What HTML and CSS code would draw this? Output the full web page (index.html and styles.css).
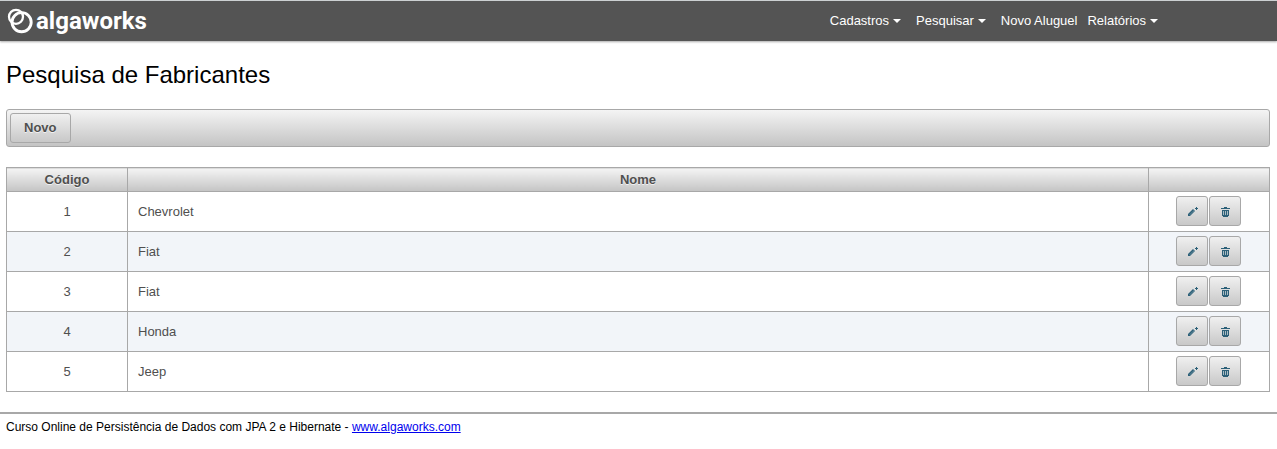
FILE: index.html
```html
<!DOCTYPE html>
<html lang="pt-BR">
<head>
<meta charset="utf-8">
<title>Pesquisa de Fabricantes</title>
<link rel="stylesheet" href="styles.css">
</head>
<body>
<svg width="0" height="0" class="sprite" aria-hidden="true">
  <symbol id="pencil" viewBox="0 0 10 10"><path d="M0 9V7L5 2L7 4L2 9Z" fill="#2c6078"/><path d="M2 7.5L6 3.5" stroke="#b9c8ce" stroke-width=".7" stroke-dasharray="1 .6"/><path d="M7 1H8V0H9V1H10V2H9V3H8V2H7Z" fill="#2c6078"/></symbol>
  <symbol id="trash" viewBox="0 0 10 10"><path d="M3 0H6V1H9V2H0V1H3ZM1 3H8V9H7V10H2V9H1Z" fill="#2c6078"/><path d="M2.5 4V8M4.5 4V8M6.5 4V8" stroke="#c9d3d7" stroke-width=".8"/></symbol>
  <symbol id="caret" viewBox="0 0 8 4"><path d="M0 0H8L4 4Z" fill="#fff"/></symbol>
</svg>
<header class="topbar">
  <a class="logo" href="#" aria-label="algaworks">
    <svg class="mark" viewBox="0 0 26 26" fill="none" stroke="#fff"><circle cx="14.6" cy="14.2" r="9.6" stroke-width="2.9"/><circle cx="9" cy="8.8" r="7" stroke-width="2.3"/></svg>
    <span>algaworks</span>
  </a>
  <nav class="menu">
    <a class="parent" href="#">Cadastros<svg class="caret"><use href="#caret"/></svg></a>
    <a class="parent" href="#">Pesquisar<svg class="caret"><use href="#caret"/></svg></a>
    <a class="single" href="#">Novo Aluguel</a>
    <a href="#">Relatórios<svg class="caret"><use href="#caret"/></svg></a>
  </nav>
</header>
<main class="content">
  <h1>Pesquisa de Fabricantes</h1>
  <div class="toolbar"><button class="btn" type="button">Novo</button></div>
  <table class="grid">
    <colgroup><col class="narrow"><col><col class="narrow"></colgroup>
    <thead><tr><th>Código</th><th>Nome</th><th></th></tr></thead>
    <tbody>
      <tr><td>1</td><td>Chevrolet</td><td><div class="actions"><button class="btn icon" type="button" aria-label="Editar"><svg><use href="#pencil"/></svg></button><button class="btn icon" type="button" aria-label="Excluir"><svg><use href="#trash"/></svg></button></div></td></tr>
      <tr><td>2</td><td>Fiat</td><td><div class="actions"><button class="btn icon" type="button" aria-label="Editar"><svg><use href="#pencil"/></svg></button><button class="btn icon" type="button" aria-label="Excluir"><svg><use href="#trash"/></svg></button></div></td></tr>
      <tr><td>3</td><td>Fiat</td><td><div class="actions"><button class="btn icon" type="button" aria-label="Editar"><svg><use href="#pencil"/></svg></button><button class="btn icon" type="button" aria-label="Excluir"><svg><use href="#trash"/></svg></button></div></td></tr>
      <tr><td>4</td><td>Honda</td><td><div class="actions"><button class="btn icon" type="button" aria-label="Editar"><svg><use href="#pencil"/></svg></button><button class="btn icon" type="button" aria-label="Excluir"><svg><use href="#trash"/></svg></button></div></td></tr>
      <tr><td>5</td><td>Jeep</td><td><div class="actions"><button class="btn icon" type="button" aria-label="Editar"><svg><use href="#pencil"/></svg></button><button class="btn icon" type="button" aria-label="Excluir"><svg><use href="#trash"/></svg></button></div></td></tr>
    </tbody>
  </table>
</main>
<footer class="footer">Curso Online de Persistência de Dados com JPA 2 e Hibernate - <a href="#">www.algaworks.com</a></footer>
</body>
</html>
```
FILE: styles.css
```css
* { box-sizing: border-box; }
body {
  margin: 0;
  background: #fff;
  color: #000;
  font-family: "Liberation Sans", Arial, sans-serif;
  font-size: 13px;
}
.sprite { position: absolute; }
.topbar {
  display: flex;
  align-items: center;
  justify-content: space-between;
  height: 41px;
  padding: 0 119px 0 7px;
  background: #545454;
  border-top: 1px solid #ccd0d2;
  box-shadow: 0 1px 2px #aaa;
}
.logo {
  display: flex;
  align-items: center;
  gap: 3px;
  color: #fff;
  font: bold 24px/32px Roboto, "Liberation Sans", sans-serif;
  text-decoration: none;
}
.mark { width: 26px; height: 26px; }
.menu { display: flex; }
.menu a {
  display: flex;
  align-items: center;
  gap: 4px;
  color: #fff;
  line-height: 16px;
  text-decoration: none;
}
.menu .parent { margin-right: 15px; }
.menu .single { margin-right: 10px; }
.caret { width: 8px; height: 4px; }
.content { padding: 0 7px 0 6px; }
h1 {
  margin: 20px 0;
  font-size: 24px;
  font-weight: normal;
  line-height: 28px;
}
.toolbar {
  display: flex;
  padding: 3px;
  margin-bottom: 20px;
  border: 1px solid #a8a8a8;
  border-radius: 3px;
  background: linear-gradient(#f4f4f4, #c4c4c4);
}
.btn {
  height: 30px;
  padding: 0 13px;
  border: 1px solid #a8a8a8;
  border-radius: 3px;
  background: linear-gradient(#f0f0f0, #c8c8c8);
  color: #4f4f4f;
  font: bold 13px/16px "Liberation Sans", Arial, sans-serif;
  text-shadow: 0 1px 0 rgba(255, 255, 255, .7);
}
.grid {
  width: 100%;
  border-collapse: collapse;
  table-layout: fixed;
  color: #4f4f4f;
}
.narrow { width: 121px; }
.grid th, .grid td { border: 1px solid #a8a8a8; }
.grid th {
  height: 24px;
  padding: 0 10px;
  background: linear-gradient(#f4f4f4, #c4c4c4);
  line-height: 16px;
  text-shadow: 0 1px 0 rgba(255, 255, 255, .7);
}
.grid td {
  height: 40px;
  padding: 0 10px;
  line-height: 16px;
}
.grid td:first-child { text-align: center; }
.grid td:last-child { padding: 0 12px 2px 10px; }
.grid tbody tr:nth-child(even) { background: #f2f5f9; }
.actions { display: flex; justify-content: center; gap: 1px; }
.icon {
  display: flex;
  align-items: center;
  justify-content: center;
  width: 32px;
  padding: 2px 0 0 2px;
}
.icon svg { width: 10px; height: 10px; }
.footer {
  margin-top: 20px;
  padding: 5px 6px;
  border-top: 2px solid #a8a8a8;
  font-size: 12px;
  line-height: 16px;
}
.footer a { color: #00e; }
```
